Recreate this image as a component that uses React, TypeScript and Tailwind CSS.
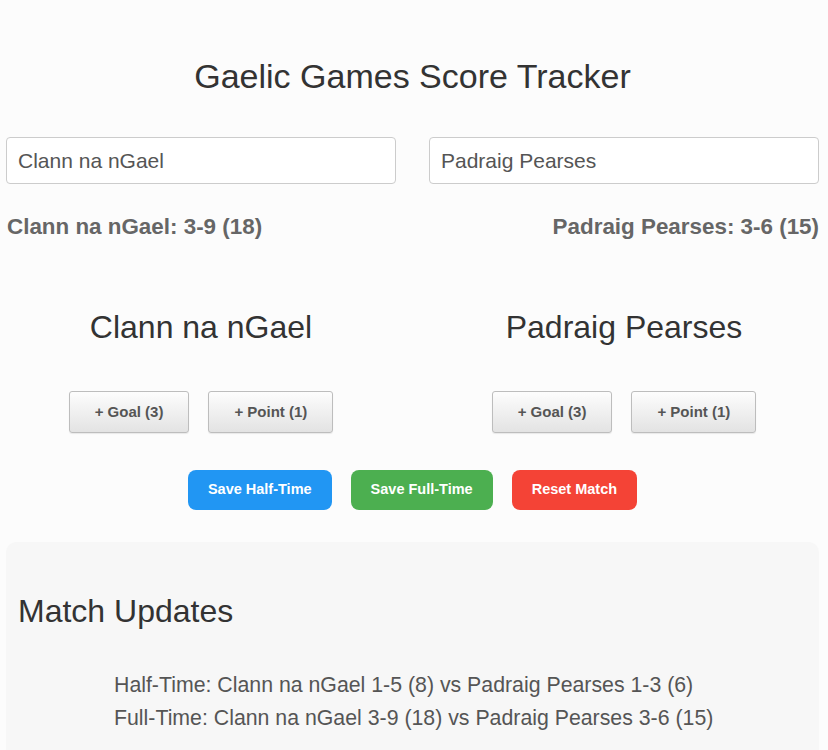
import { useState } from "react";

type Team = { name: string; goals: number; points: number };

const total = (t: Team) => t.goals * 3 + t.points;
const line = (t: Team) => `${t.name} ${t.goals}-${t.points} (${total(t)})`;

const App = () => {
  const [home, setHome] = useState<Team>({ name: "Clann na nGael", goals: 3, points: 9 });
  const [away, setAway] = useState<Team>({ name: "Padraig Pearses", goals: 3, points: 6 });
  const [updates, setUpdates] = useState<string[]>([
    "Half-Time: Clann na nGael 1-5 (8) vs Padraig Pearses 1-3 (6)",
    "Full-Time: Clann na nGael 3-9 (18) vs Padraig Pearses 3-6 (15)",
  ]);

  const teams = [
    { team: home, set: setHome },
    { team: away, set: setAway },
  ];

  const save = (label: string) =>
    setUpdates((u) => [...u, `${label}: ${line(home)} vs ${line(away)}`]);

  return (
    <div className="min-h-screen bg-[#fcfcfc] pl-[6px] pr-[9px] font-['Liberation_Sans',Arial,sans-serif]">
      <h1 className="pt-[56px] text-center text-[34px] leading-[40px] text-[#333]">
        Gaelic Games Score Tracker
      </h1>

      {/* team name inputs */}
      <div className="mt-[41px] grid grid-cols-2 gap-[33px]">
        {teams.map(({ team, set }, i) => (
          <input
            key={i}
            value={team.name}
            onChange={(e) => set({ ...team, name: e.target.value })}
            className="h-[47px] w-full rounded-[4px] border border-[#ccc] bg-white px-[11px] text-[21px] text-[#555] outline-none"
          />
        ))}
      </div>

      <div className="mt-[29px] flex justify-between text-[22.4px] font-bold leading-[28px] text-[#666]">
        <span className="pl-[1px]">
          {home.name}: {home.goals}-{home.points} ({total(home)})
        </span>
        <span>
          {away.name}: {away.goals}-{away.points} ({total(away)})
        </span>
      </div>

      {/* scoring columns */}
      <div className="mt-[66px] grid grid-cols-2 gap-[33px]">
        {teams.map(({ team, set }, i) => (
          <div key={i} className="flex flex-col items-center">
            <h2 className="text-[32px] leading-[40px] text-[#333]">{team.name}</h2>
            <div className="mt-[44px] flex gap-[19px]">
              <button
                onClick={() => set({ ...team, goals: team.goals + 1 })}
                className="h-[42px] rounded-[3px] border border-[#bdbdbd] bg-gradient-to-b from-[#fdfdfd] to-[#e3e3e3] px-[25px] text-[15px] font-bold text-[#555] shadow-[0_1px_1px_rgba(0,0,0,0.08)]"
              >
                + Goal (3)
              </button>
              <button
                onClick={() => set({ ...team, points: team.points + 1 })}
                className="h-[42px] rounded-[3px] border border-[#bdbdbd] bg-gradient-to-b from-[#fdfdfd] to-[#e3e3e3] px-[25px] text-[15px] font-bold text-[#555] shadow-[0_1px_1px_rgba(0,0,0,0.08)]"
              >
                + Point (1)
              </button>
            </div>
          </div>
        ))}
      </div>

      <div className="mt-[37px] flex justify-center gap-[19px] text-[14.5px] font-bold text-white">
        <button onClick={() => save("Half-Time")} className="h-[40px] rounded-[8px] bg-[#2196f3] px-[20px]">
          Save Half-Time
        </button>
        <button onClick={() => save("Full-Time")} className="h-[40px] rounded-[8px] bg-[#4caf50] px-[20px]">
          Save Full-Time
        </button>
        <button
          onClick={() => {
            setHome({ ...home, goals: 0, points: 0 });
            setAway({ ...away, goals: 0, points: 0 });
            setUpdates([]);
          }}
          className="h-[40px] rounded-[8px] bg-[#f44336] px-[20px]"
        >
          Reset Match
        </button>
      </div>

      {/* updates panel */}
      <div className="mt-[32px] rounded-[10px] bg-[#f7f7f7] px-[12px] pt-[49px] pb-[40px]">
        <h2 className="text-[32px] leading-[40px] text-[#333]">Match Updates</h2>
        <ul className="ml-[96px] mt-[38px] list-none text-[21.3px] leading-[33px] text-[#555]">
          {updates.map((u, i) => (
            <li key={i}>{u}</li>
          ))}
        </ul>
      </div>
    </div>
  );
};

export default App;
